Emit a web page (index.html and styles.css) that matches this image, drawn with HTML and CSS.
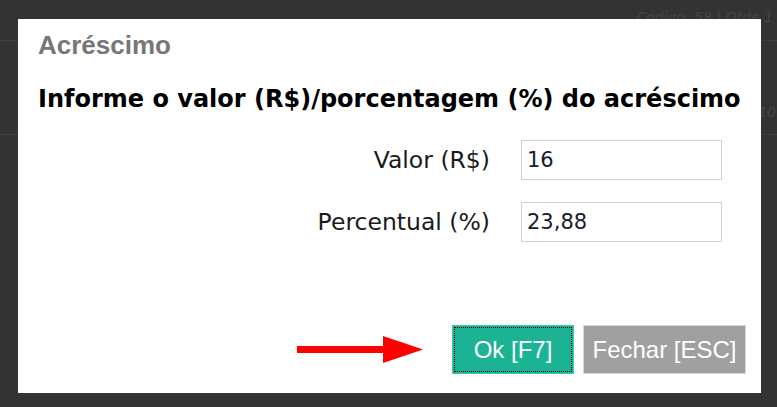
FILE: index.html
```html
<!DOCTYPE html>
<html lang="pt-BR">
<head>
  <meta charset="UTF-8">
  <title>Acréscimo</title>
  <link rel="stylesheet" href="styles.css">
</head>
<body>
  <div class="page">
    <div class="row row-top"><span class="faint">Código: 58 | Qtde 1</span></div>
    <div class="row row-mid"><span class="faint">10</span></div>
  </div>

  <div class="modal">
    <div class="modal-title">Acréscimo</div>
    <h2 class="modal-heading">Informe o valor (R$)/porcentagem (%) do acréscimo</h2>
    <div class="form-row">
      <label for="valor">Valor (R$)</label>
      <input id="valor" type="text" value="16">
    </div>
    <div class="form-row">
      <label for="percentual">Percentual (%)</label>
      <input id="percentual" type="text" value="23,88">
    </div>
    <div class="modal-footer">
      <svg class="arrow" width="128" height="28" viewBox="0 0 128 28">
        <rect x="0" y="10" width="88" height="7" fill="#ff0000"/>
        <polygon points="86,0 126,13.5 86,27" fill="#ff0000"/>
      </svg>
      <button class="btn btn-ok">Ok [F7]</button>
      <button class="btn btn-close">Fechar [ESC]</button>
    </div>
  </div>
</body>
</html>
```

FILE: styles.css
```css
body {
  margin: 0;
  background-color: #333333;
  font-family: "DejaVu Sans", Verdana, sans-serif;
  overflow: hidden;
}
.page {
  height: 407px;
}
.row {
  border-bottom: 1px solid #404040;
  text-align: right;
  font-style: italic;
  font-size: 14px;
}
.row-top {
  height: 40px;
}
.row-top .faint {
  display: inline-block;
  margin-top: 9px;
  margin-right: 4px;
}
.row-mid {
  height: 93px;
}
.row-mid .faint {
  display: inline-block;
  margin-top: 63px;
  margin-right: 1px;
}
.faint {
  color: #454545;
}
.modal {
  position: absolute;
  left: 18px;
  top: 19px;
  width: 743px;
  height: 374px;
  background: white;
  box-sizing: border-box;
  padding: 11px 15px 0 20px;
  display: flex;
  flex-direction: column;
}
.modal-title {
  font-family: "Liberation Sans", Arial, sans-serif;
  font-weight: bold;
  font-size: 26px;
  color: #777777;
  line-height: 30px;
}
.modal-heading {
  margin: 25px 0 0 0;
  font-size: 24px;
  font-weight: bold;
  color: #000;
  line-height: 28px;
}
.form-row {
  display: flex;
  align-items: center;
  margin-top: 27px;
}
.form-row + .form-row {
  margin-top: 22px;
}
.form-row label {
  width: 452px;
  text-align: right;
  font-size: 23.5px;
  color: #1a1a1a;
  margin-right: 31px;
}
.form-row input {
  width: 201px;
  height: 40px;
  box-sizing: border-box;
  border: 1px solid #cfcfcf;
  padding: 0 5px;
  font-family: "DejaVu Sans", Verdana, sans-serif;
  font-size: 21px;
  color: #1a1a2e;
  outline: none;
}
.modal-footer {
  margin-top: auto;
  margin-bottom: 19px;
  display: flex;
  justify-content: flex-end;
  align-items: center;
  gap: 9px;
}
.arrow {
  margin-right: 18px;
}
.btn {
  font-family: "Liberation Sans", Arial, sans-serif;
  font-size: 24px;
  color: white;
  cursor: pointer;
  height: 49px;
  padding: 0;
}
.btn-ok {
  width: 122px;
  background-color: #1ab394;
  border: 1px solid #45c8ad;
  outline: 1px dotted #000;
  outline-offset: -3px;
}
.btn-close {
  width: 163px;
  background-color: #a0a0a0;
  border: 1px solid #d8d8d8;
}
```
